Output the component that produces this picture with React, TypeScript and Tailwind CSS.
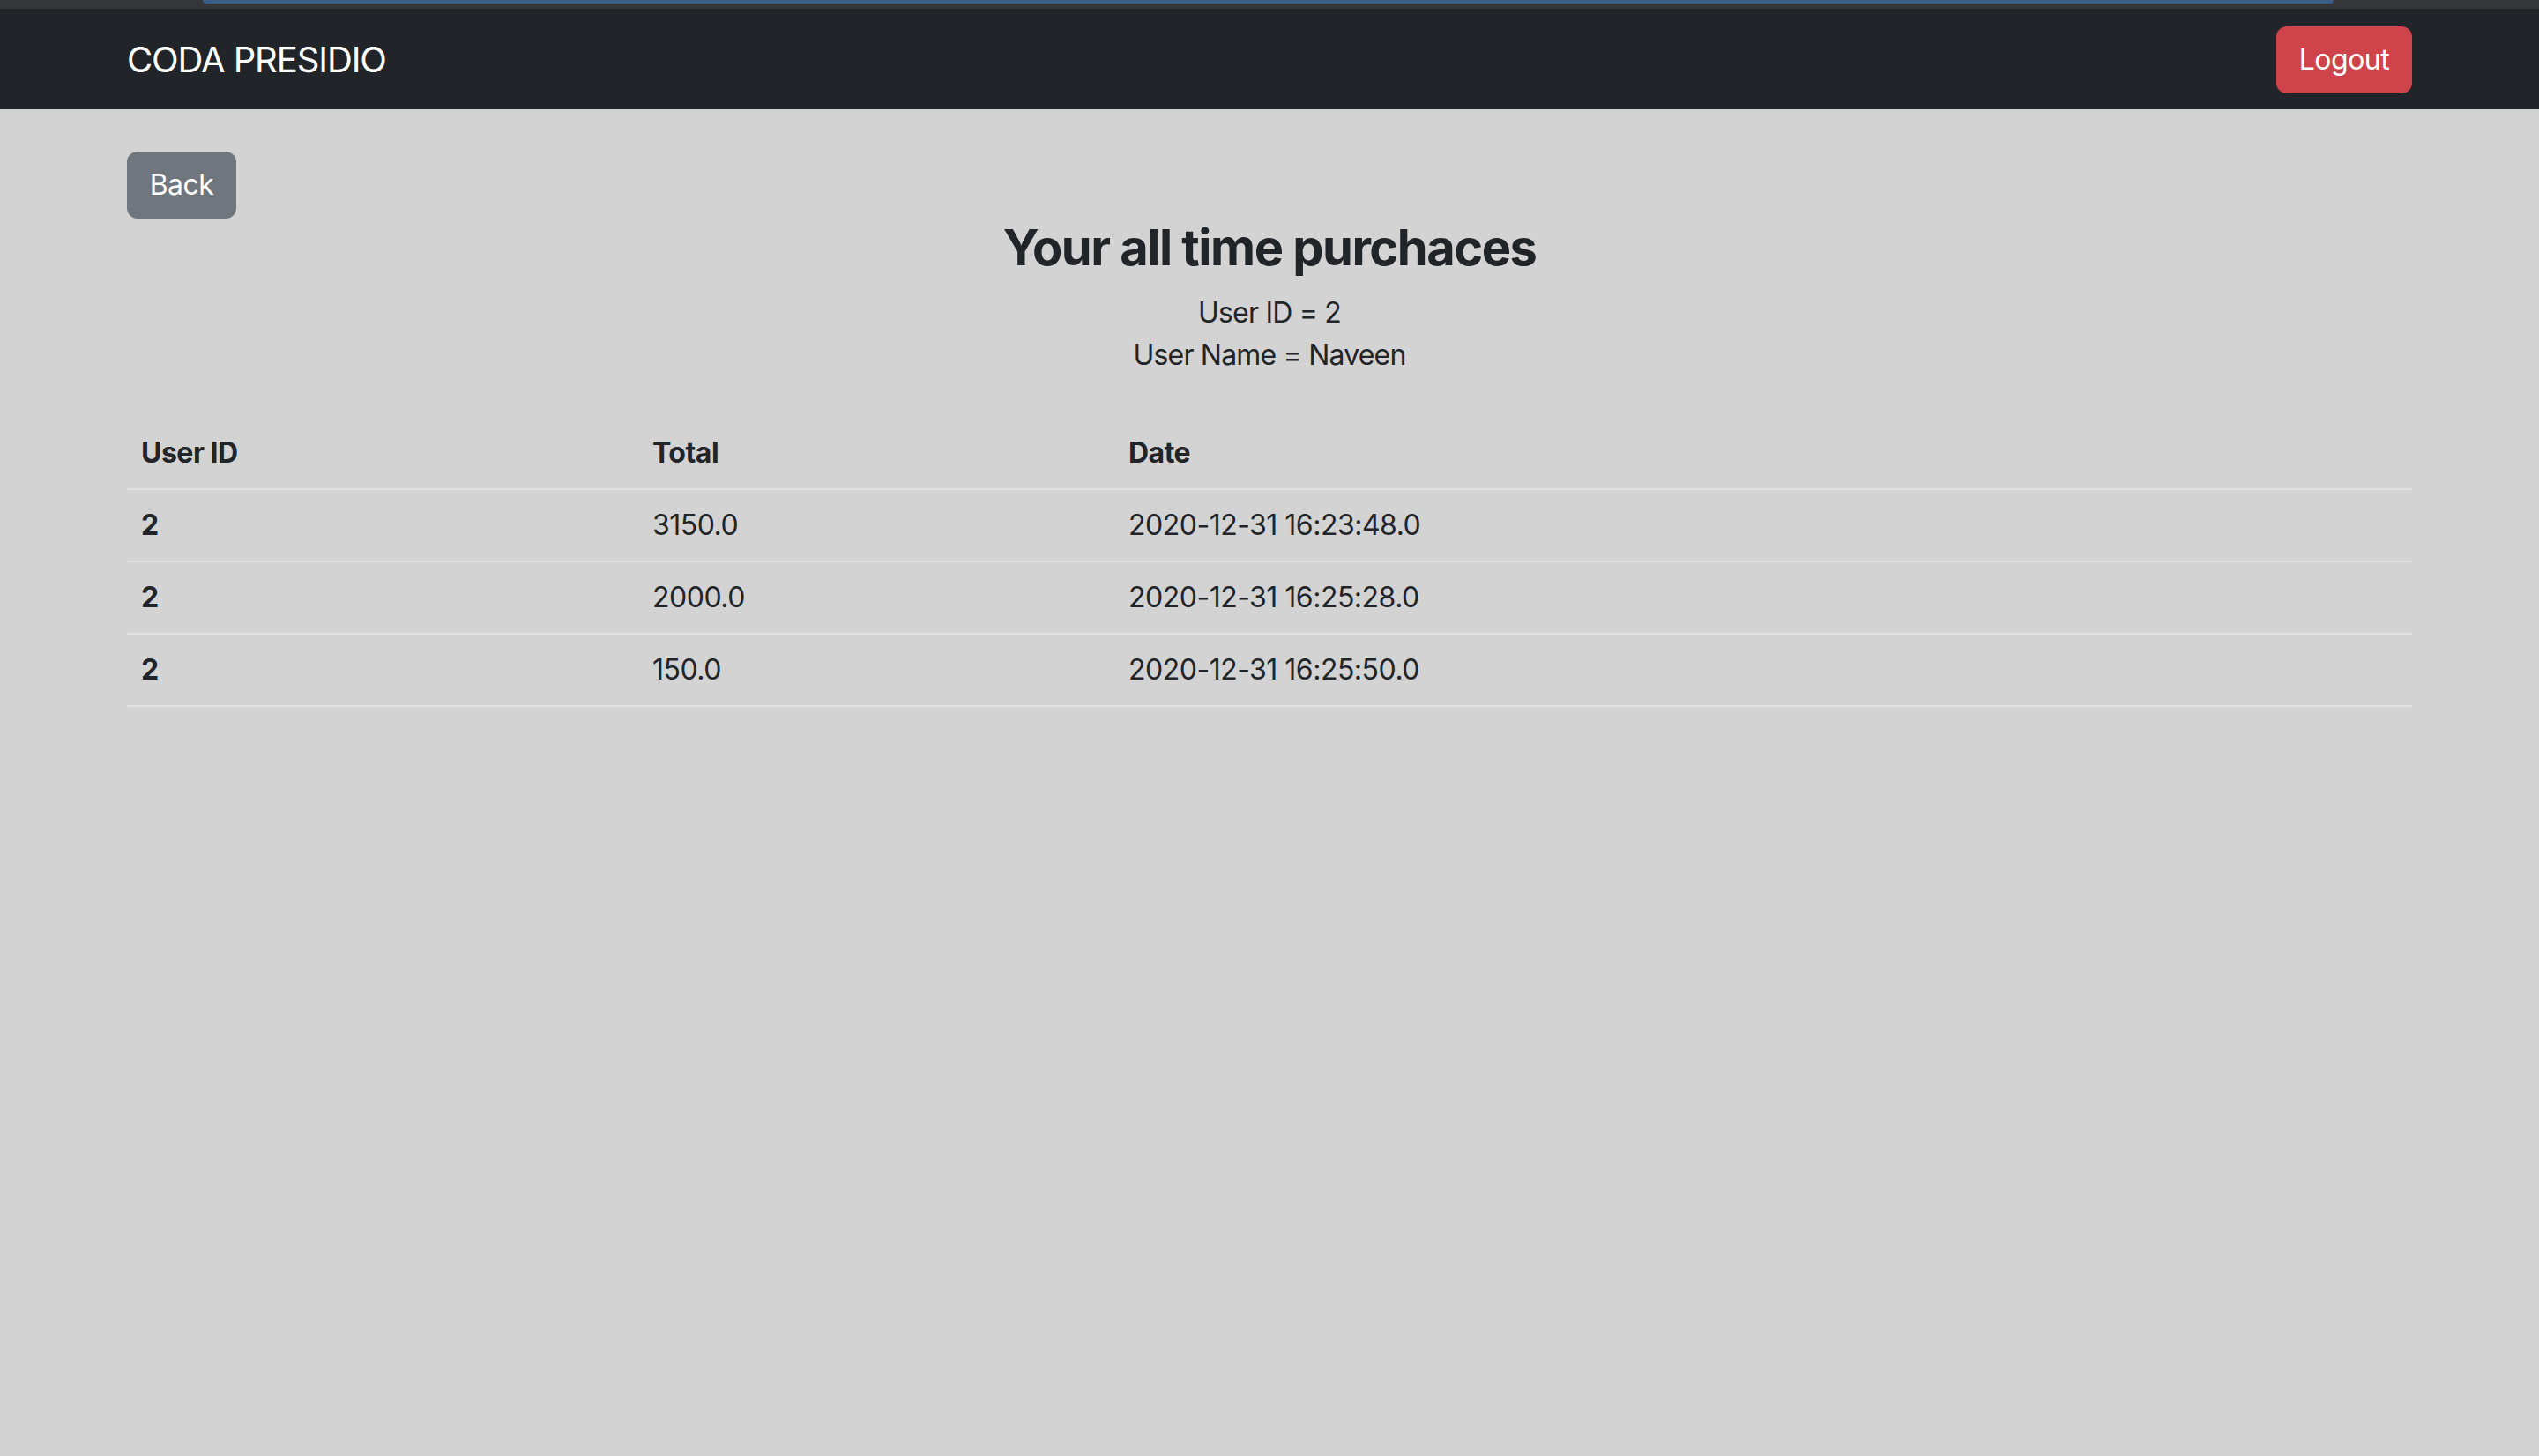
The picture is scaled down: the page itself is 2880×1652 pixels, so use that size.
import type React from "react"

interface Purchase {
  userId: number
  total: string
  date: string
}

const purchases: Purchase[] = [
  { userId: 2, total: "3150.0", date: "2020-12-31 16:23:48.0" },
  { userId: 2, total: "2000.0", date: "2020-12-31 16:25:28.0" },
  { userId: 2, total: "150.0", date: "2020-12-31 16:25:50.0" },
]

const Navbar: React.FC = () => {
  return (
    <nav className="h-[114px] bg-[#212529]">
      <div className="h-full px-[144px] pt-[2px] flex items-center justify-between">
        <a href="#" className="text-[40px] leading-[60px] tracking-[-1.1px] text-white">
          CODA PRESIDIO
        </a>
        <button className="h-[76px] w-[154px] rounded-[12px] bg-[#cf444b] text-[32px] tracking-[-0.5px] text-white">
          Logout
        </button>
      </div>
    </nav>
  )
}

const App: React.FC = () => {
  return (
    <div className="min-h-screen bg-[#d3d3d3] text-[#212529] tracking-[-0.5px] font-['Inter',sans-serif]">
      {/* browser chrome strip */}
      <div className="h-[10px] bg-[#35363a]">
        <div className="ml-[230px] w-[2417px] h-[4px] rounded-b-[10px] bg-[#3a5f87]"></div>
      </div>

      <Navbar />

      <main className="px-[144px] pt-[48px]">
        <button className="h-[76px] w-[124px] rounded-[12px] bg-[#6f767d] text-[32px] text-white">
          Back
        </button>

        <h3 className="text-center text-[56px] leading-[1.2] font-bold tracking-[-1.5px] mb-[16px]">
          Your all time purchaces
        </h3>
        <p className="text-center text-[32px] leading-[48px] tracking-[-0.8px]">User ID = 2</p>
        <p className="text-center text-[32px] leading-[48px] tracking-[-0.8px]">User Name = Naveen</p>

        <table className="w-full mt-[47px] border-collapse text-left text-[32px] leading-[48px]">
          <thead>
            <tr className="border-b-2 border-[#dee2e6]">
              <th className="w-[580px] px-[16px] py-[16px] font-bold">User ID</th>
              <th className="w-[540px] px-[16px] py-[16px] font-bold">Total</th>
              <th className="px-[16px] py-[16px] font-bold">Date</th>
            </tr>
          </thead>
          <tbody>
            {purchases.map((p, i) => (
              <tr key={i} className="border-b-2 border-[#dee2e6]">
                <th className="px-[16px] py-[16px] font-bold">{p.userId}</th>
                <td className="px-[16px] py-[16px]">{p.total}</td>
                <td className="px-[16px] py-[16px]">{p.date}</td>
              </tr>
            ))}
          </tbody>
        </table>
      </main>
    </div>
  )
}

export default App
